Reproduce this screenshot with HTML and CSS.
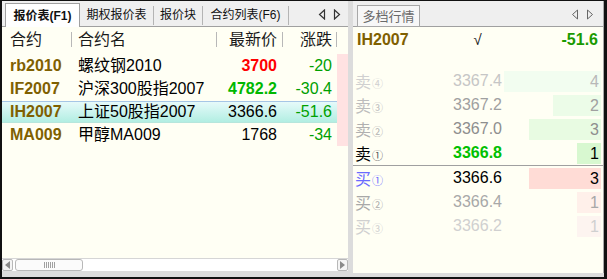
FILE: index.html
```html
<!DOCTYPE html>
<html lang="zh-CN">
<head>
    <meta charset="UTF-8">
    <title>报价表</title>
    <link rel="stylesheet" href="styles.css">
</head>
<body>
    <div class="window">
        <!-- 报价表 -->
        <section class="panel quote">
            <div class="tabbar">
                <div class="tab active">报价表(F1)</div>
                <div class="tab" style="width:73px">期权报价表</div>
                <div class="tab" style="width:48px">报价块</div>
                <div class="tab" style="width:85px">合约列表(F6)</div>
                <div class="tab-arrows">
                    <svg width="8" height="11" viewBox="0 0 8 11"><path d="M6.5 1 L1.5 5.5 L6.5 10 Z" fill="none" stroke="#333" stroke-width="1.2"/></svg>
                    <svg width="8" height="11" viewBox="0 0 8 11"><path d="M1.5 1 L6.5 5.5 L1.5 10 Z" fill="none" stroke="#333" stroke-width="1.2"/></svg>
                </div>
            </div>

            <div class="table">
                <div class="row head">
                    <div class="cell sep">合约</div>
                    <div class="cell name sep">合约名</div>
                    <div class="cell num sep">最新价</div>
                    <div class="cell num sep">涨跌</div>
                    <div class="cell"></div>
                </div>
                <div class="row">
                    <div class="cell code">rb2010</div>
                    <div class="cell name">螺纹钢2010</div>
                    <div class="cell num up">3700</div>
                    <div class="cell num chg">-20</div>
                    <div class="cell mark"></div>
                </div>
                <div class="row">
                    <div class="cell code">IF2007</div>
                    <div class="cell name">沪深300股指2007</div>
                    <div class="cell num down">4782.2</div>
                    <div class="cell num chg">-30.4</div>
                    <div class="cell mark"></div>
                </div>
                <div class="row selected">
                    <div class="cell code">IH2007</div>
                    <div class="cell name">上证50股指2007</div>
                    <div class="cell num">3366.6</div>
                    <div class="cell num chg">-51.6</div>
                    <div class="cell mark"></div>
                </div>
                <div class="row">
                    <div class="cell code">MA009</div>
                    <div class="cell name">甲醇MA009</div>
                    <div class="cell num">1768</div>
                    <div class="cell num chg">-34</div>
                    <div class="cell mark"></div>
                </div>
            </div>

            <div class="hscroll">
                <div class="sb-btn">
                    <svg width="5" height="8" viewBox="0 0 5 8"><path d="M5 0 L0 4 L5 8 Z" fill="#8a8a8a"/></svg>
                </div>
                <div class="sb-thumb"><span class="grip"></span></div>
                <div class="sb-track"></div>
                <div class="sb-btn">
                    <svg width="5" height="8" viewBox="0 0 5 8"><path d="M0 0 L5 4 L0 8 Z" fill="#8a8a8a"/></svg>
                </div>
            </div>
        </section>

        <div class="splitter"></div>

        <!-- 多档行情 -->
        <section class="panel depth">
            <div class="tabbar">
                <div class="tab light">多档行情</div>
                <div class="tab-arrows">
                    <svg width="8" height="11" viewBox="0 0 8 11"><path d="M6.5 1 L1.5 5.5 L6.5 10 Z" fill="none" stroke="#666" stroke-width="1"/></svg>
                    <svg width="8" height="11" viewBox="0 0 8 11"><path d="M1.5 1 L6.5 5.5 L1.5 10 Z" fill="none" stroke="#666" stroke-width="1"/></svg>
                </div>
            </div>

            <div class="title-row">
                <span class="code">IH2007</span>
                <span class="tick">√</span>
                <span class="title-chg">-51.6</span>
            </div>

            <div class="book">
                <div class="level ask lv4">
                    <span class="side">卖<small>④</small></span>
                    <span class="price">3367.4</span>
                    <span class="vol"><span class="bar" style="width:97px">4</span></span>
                </div>
                <div class="level ask lv3">
                    <span class="side">卖<small>③</small></span>
                    <span class="price">3367.2</span>
                    <span class="vol"><span class="bar" style="width:48px">2</span></span>
                </div>
                <div class="level ask lv2">
                    <span class="side">卖<small>②</small></span>
                    <span class="price">3367.0</span>
                    <span class="vol"><span class="bar" style="width:72px">3</span></span>
                </div>
                <div class="level ask lv1">
                    <span class="side">卖<small>①</small></span>
                    <span class="price">3366.8</span>
                    <span class="vol"><span class="bar" style="width:24px">1</span></span>
                </div>
                <div class="book-line"></div>
                <div class="level bid lv1">
                    <span class="side">买<small>①</small></span>
                    <span class="price">3366.6</span>
                    <span class="vol"><span class="bar" style="width:72px">3</span></span>
                </div>
                <div class="level bid lv2">
                    <span class="side">买<small>②</small></span>
                    <span class="price">3366.4</span>
                    <span class="vol"><span class="bar" style="width:24px">1</span></span>
                </div>
                <div class="level bid lv3">
                    <span class="side">买<small>③</small></span>
                    <span class="price">3366.2</span>
                    <span class="vol"><span class="bar" style="width:24px">1</span></span>
                </div>
            </div>
        </section>
    </div>
</body>
</html>
```

FILE: styles.css
```css
body {
    margin: 0;
    background-color: #dcdcdc;
    font-family: "Liberation Sans", "Noto Sans CJK SC", sans-serif;
}
.window {
    display: flex;
    width: 607px;
    height: 279px;
    box-sizing: border-box;
    border-style: solid;
    border-color: #111;
    border-width: 1px 3px 2px 2px;
    padding-bottom: 4px;
    background-color: #dcdcdc;
}
.panel {
    display: flex;
    flex-direction: column;
    background-color: #fffff4;
}
.quote {
    width: 346px;
    padding-bottom: 2px;
    background-color: #dcdcdc;
}
.splitter {
    width: 5px;
    background-color: #dcdcdc;
}
.depth {
    flex: 1;
    border-right: 1px solid #a8a8a8;
}

/* 标签栏 */
.tabbar {
    display: flex;
    align-items: flex-end;
    height: 26px;
    padding-left: 3px;
    background-color: #efefef;
    box-shadow: inset 0 -1px #a0a0a0;
    font-size: 12px;
    color: #111;
}
.tab {
    height: 19px;
    line-height: 19px;
    margin-bottom: 2px;
    text-align: center;
    border-right: 1px solid #b4b4b4;
    white-space: nowrap;
}
.tab.active {
    width: 75px;
    height: 24px;
    line-height: 24px;
    margin-bottom: 0;
    box-sizing: border-box;
    border: 1px solid #a0a0a0;
    border-bottom: none;
    background-color: #fff;
    font-weight: bold;
}
.tab.light {
    width: 63px;
    height: 22px;
    line-height: 21px;
    margin-left: 1px;
    margin-bottom: 0;
    box-sizing: border-box;
    border: 1px solid #a8a8a8;
    background-color: #f7f7f7;
    color: #6a6a6a;
    font-size: 13px;
}
.tab-arrows {
    display: flex;
    gap: 7px;
    margin-left: auto;
    margin-right: 7px;
    margin-bottom: 7px;
}
.depth .tab-arrows {
    margin-right: 9px;
}

/* 报价表格 */
.table {
    flex: 1;
    background-color: #fffff4;
}
.row {
    display: grid;
    grid-template-columns: 70px 145px 66px 54px 11px;
    height: 23px;
    align-items: center;
    font-size: 16px;
    white-space: nowrap;
}
.row.head {
    height: 27px;
    color: #1a1a1a;
}
.cell {
    height: 100%;
    line-height: 23px;
    padding-left: 8px;
    box-sizing: border-box;
}
.head .cell {
    line-height: 26px;
}
.cell.name {
    padding-left: 6px;
}
.cell.num {
    padding-left: 0;
    padding-right: 6px;
    text-align: right;
}
.cell.num + .cell.num {
    padding-right: 5px;
}
.head .sep {
    background: linear-gradient(#b8b8b8, #b8b8b8) right 5px / 1px 15px no-repeat;
}
.code {
    font-weight: bold;
    color: #7f6000;
}
.up {
    font-weight: bold;
    color: #ff0000;
}
.down {
    font-weight: bold;
    color: #00b800;
}
.chg {
    color: #00a000;
}
.cell.mark {
    padding: 0;
    background-color: #ffe2e2;
}
.row.selected .cell:not(.mark) {
    height: 22px;
    line-height: 20px;
    border-top: 1px solid #a6c6e6;
    border-bottom: 1px solid #b6e6dc;
    background: linear-gradient(#e6fafa, #b2eee2);
}

/* 水平滚动条 */
.hscroll {
    display: flex;
    height: 12px;
    background-color: #fff;
    border-top: 1px solid #d6d6d6;
}
.sb-btn {
    display: flex;
    align-items: center;
    justify-content: center;
    width: 11px;
    box-sizing: border-box;
    border: 1px solid #b8b8b8;
    border-radius: 2px;
    background-color: #f4f4f4;
}
.sb-thumb {
    display: flex;
    align-items: center;
    justify-content: center;
    width: 68px;
    margin-left: 2px;
    box-sizing: border-box;
    border: 1px solid #b8b8b8;
    border-radius: 3px;
    background-color: #fbfbfb;
}
.grip {
    width: 11px;
    height: 6px;
    background: repeating-linear-gradient(90deg, #a0a0a0 0 1px, transparent 1px 2px);
}
.sb-track {
    flex: 1;
}

/* 多档行情 */
.title-row {
    display: grid;
    grid-template-columns: 1fr auto 1fr;
    align-items: center;
    height: 25px;
    padding: 0 5px 0 4px;
    font-size: 16px;
    font-weight: bold;
}
.tick {
    font-weight: normal;
    font-size: 15px;
    color: #222;
}
.title-chg {
    text-align: right;
    color: #1a9a00;
}
.book {
    margin-top: 17px;
}
.level {
    display: grid;
    grid-template-columns: 60px 89px 1fr;
    align-items: center;
    height: 24px;
    font-size: 16px;
}
.side {
    padding-left: 2px;
}
.side small {
    font-size: 11px;
    margin-left: 1px;
}
.price {
    text-align: right;
}
.vol {
    display: flex;
    justify-content: flex-end;
    padding-right: 2px;
}
.bar {
    box-sizing: border-box;
    height: 21px;
    line-height: 21px;
    padding-right: 2px;
    text-align: right;
}
.book-line {
    height: 1px;
    background-color: #a0a0a0;
}
.ask.lv4 { color: #d0d0d0; }
.ask.lv4 .price { color: #c6c6c6; }
.ask.lv4 .bar { background-color: #f2fdf0; color: #b8b8b8; }
.ask.lv3 { color: #bdbdbd; }
.ask.lv3 .price, .ask.lv3 .bar { color: #a0a0a0; }
.ask.lv3 .bar { background-color: #ecfce8; }
.ask.lv2 { color: #b0b0b0; }
.ask.lv2 .price, .ask.lv2 .bar { color: #8e8e8e; }
.ask.lv2 .bar { background-color: #e8fbe2; }
.ask.lv1 { color: #000; }
.ask.lv1 .side small { color: #555; }
.ask.lv1 .price { color: #00c000; font-weight: bold; }
.ask.lv1 .bar { background-color: #d8f8d0; }
.bid.lv1 { color: #000; }
.bid.lv1 .side { color: #6a6aff; }
.bid.lv1 .bar { background-color: #ffdcd6; }
.bid.lv2 { color: #a8a8a8; }
.bid.lv2 .bar { background-color: #fff0ea; }
.bid.lv3 { color: #d0d0d0; }
.bid.lv3 .bar { background-color: #fdf4f0; }
```
